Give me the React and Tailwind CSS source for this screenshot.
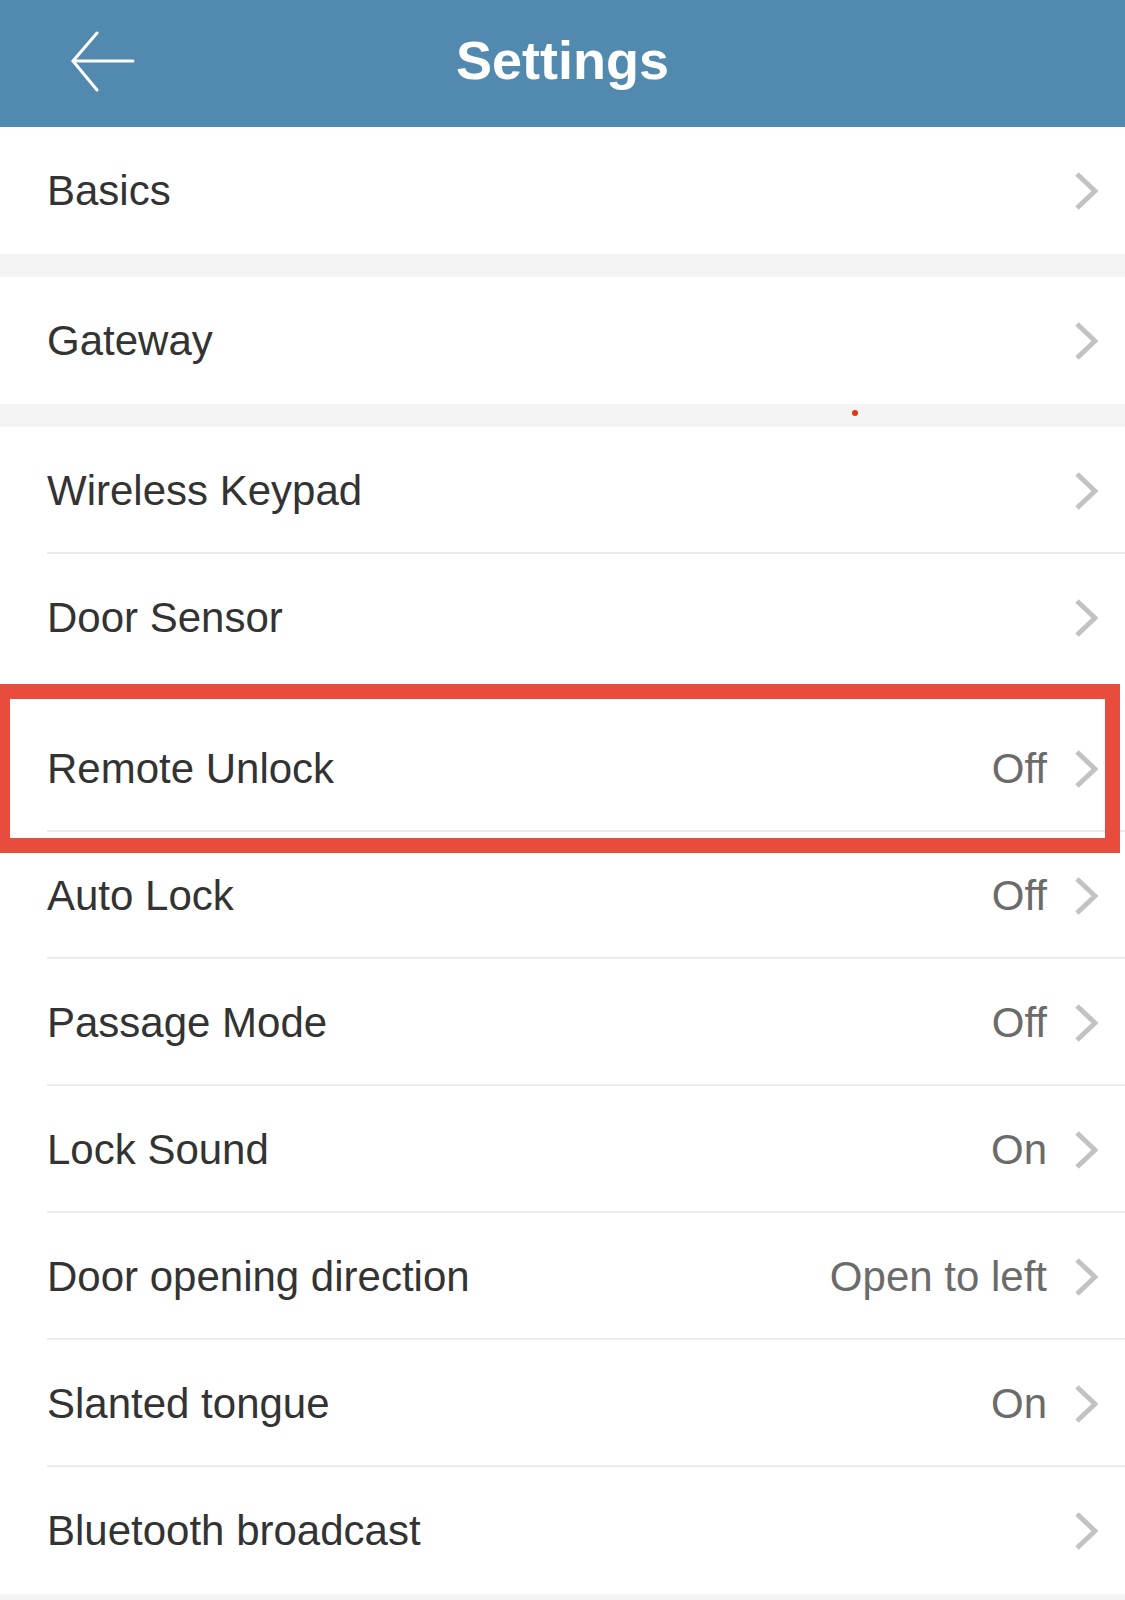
import React from 'react';

const font = { fontFamily: '"Liberation Sans", Arial, sans-serif' };

const groups = [
  [{ label: 'Basics' }],
  [{ label: 'Gateway' }],
  [
    { label: 'Wireless Keypad', line: true },
    { label: 'Door Sensor', spacer: true },
    { label: 'Remote Unlock', value: 'Off', line: true },
    { label: 'Auto Lock', value: 'Off', line: true },
    { label: 'Passage Mode', value: 'Off', line: true },
    { label: 'Lock Sound', value: 'On', line: true },
    { label: 'Door opening direction', value: 'Open to left', line: true },
    { label: 'Slanted tongue', value: 'On', line: true },
    { label: 'Bluetooth broadcast' },
  ],
];

function Chevron() {
  return (
    <svg width="24" height="40" viewBox="0 0 24 40" fill="none" className="shrink-0">
      <polyline points="3,3 21,20 3,37" stroke="#c2c2c2" strokeWidth="5" strokeLinejoin="miter" />
    </svg>
  );
}

function BackArrow() {
  return (
    <svg width="64" height="62" viewBox="0 0 64 62" fill="none">
      <line x1="2" y1="30" x2="62" y2="30" stroke="white" strokeWidth="3" strokeLinecap="round" />
      <polyline points="26,2 2,30 26,59" stroke="white" strokeWidth="3" strokeLinecap="round" strokeLinejoin="round" />
    </svg>
  );
}

function Row({ item }) {
  return (
    <>
      <div className="flex h-[127px] items-center bg-white pl-[47px]">
        <div className="flex h-full flex-1 items-center pr-[27px]">
          <span className="flex-1 text-[42px] text-[#333333]">{item.label}</span>
          {item.value && <span className="mr-[27px] text-[42px] text-[#6b6b6b]">{item.value}</span>}
          <Chevron />
        </div>
      </div>
      {item.line && <div className="ml-[47px] h-[2px] -mt-[2px] relative bg-[#ececec]" />}
      {item.spacer && <div className="h-[24px] bg-white" />}
    </>
  );
}

export default function App() {
  return (
    <div className="relative h-[1600px] w-[1125px] overflow-hidden bg-[#f4f4f4]" style={font}>
      <header className="flex h-[127px] items-center bg-[#5289ae]">
        <div className="flex w-[140px] justify-start pl-[71px] pb-[4px]">
          <BackArrow />
        </div>
        <h1 className="flex-1 pb-[6px] text-center text-[54px] font-bold text-white">Settings</h1>
        <div className="w-[140px]" />
      </header>

      <div className="flex flex-col gap-[23px]">
        {groups.map((rows, i) => (
          <div key={i} className="flex flex-col bg-white">
            {rows.map((item) => (
              <Row key={item.label} item={item} />
            ))}
          </div>
        ))}
      </div>

      {/* highlight frame around the remote unlock row */}
      <div className="pointer-events-none absolute left-[-5px] top-[684px] h-[169px] w-[1125px] border-[15px] border-[#e74c3c]" />
      <div className="absolute left-[852px] top-[410px] h-[6px] w-[6px] rounded-full bg-[#e63312]" />
    </div>
  );
}
